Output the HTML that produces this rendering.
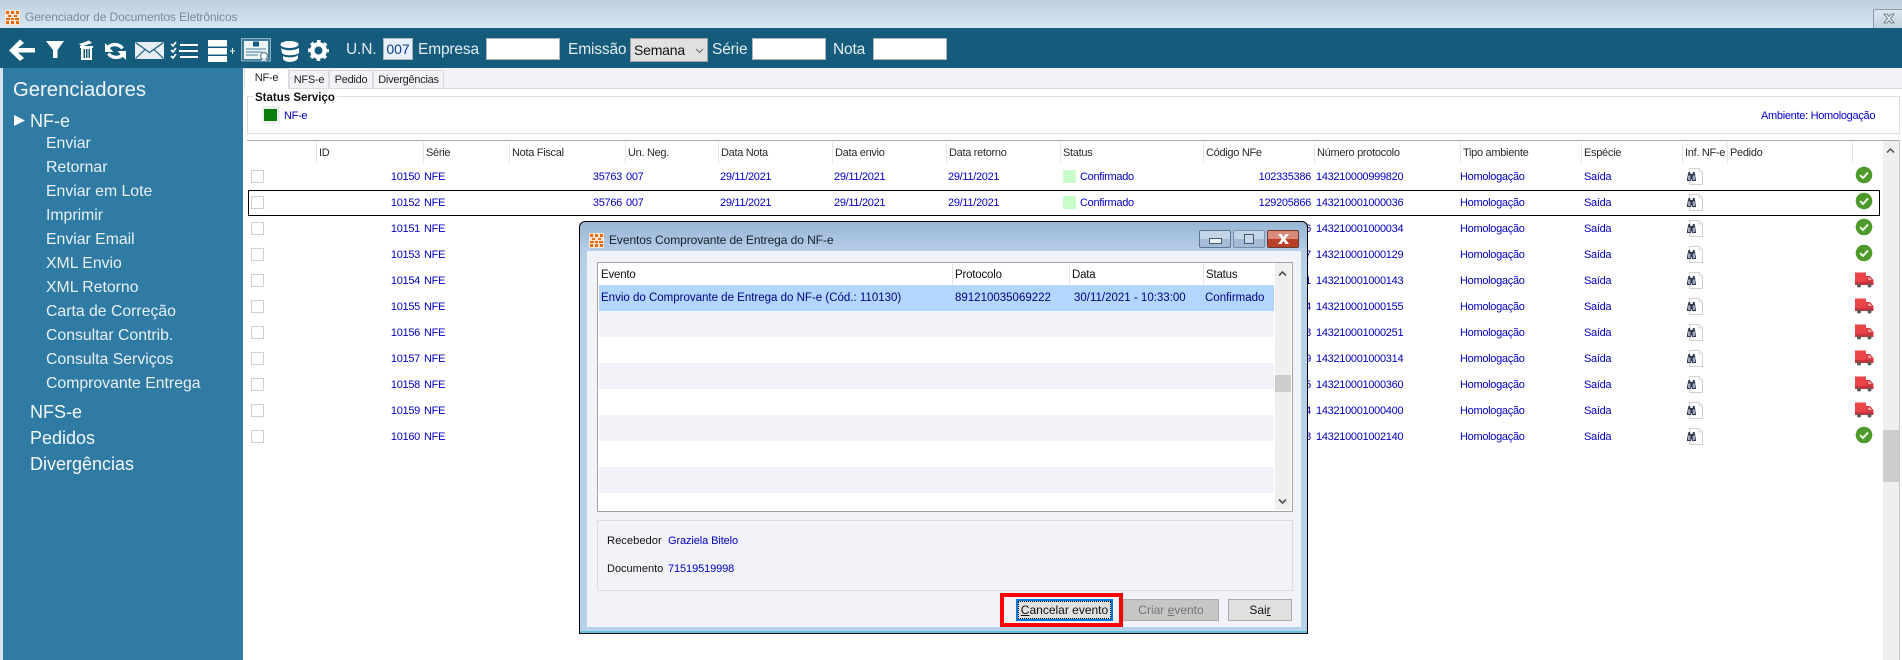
<!DOCTYPE html>
<html lang="pt-BR">
<head>
<meta charset="utf-8">
<title>Gerenciador de Documentos Eletrônicos</title>
<style>
html,body{margin:0;padding:0;width:1902px;height:660px;overflow:hidden;background:#fff;font-family:"Liberation Sans",sans-serif;}
div,span,i,b,svg{position:absolute;}
.x{white-space:nowrap;}
#title{left:0;top:0;width:1902px;height:28px;background:linear-gradient(#bbcddd,#d9e7f2);}
#bar{left:0;top:28px;width:1902px;height:40px;background:#155c7c;}
#frame{left:0;top:68px;width:3px;height:592px;background:#d8e6f2;}
#side{left:3px;top:68px;width:240px;height:592px;background:#2f7ba3;}
#strip{left:244px;top:68px;width:1658px;height:20px;background:#f1f3f8;border-bottom:1px solid #dcdcdc;}
.lb{color:#e4ecf1;font-size:15.5px;letter-spacing:-.15px;line-height:22px;top:39px;white-space:nowrap;}
.in{background:#fff;border:1px solid #a9b4bb;box-sizing:border-box;top:38px;height:22px;}
.s1{color:#f4f8fa;font-size:18px;line-height:24px;left:30px;white-space:nowrap;}
.s2{color:#e8f0f5;font-size:15.8px;line-height:24px;left:46px;white-space:nowrap;}
.tab{top:70px;height:18px;background:#f1f3f8;border:1px solid #dcdcdc;border-bottom:0;box-sizing:border-box;font-size:11px;letter-spacing:-.25px;line-height:18px;text-align:center;color:#222;}
.h{top:145px;font-size:11px;letter-spacing:-.3px;line-height:16px;color:#2a2a2a;white-space:nowrap;}
.sp{top:142px;width:1px;height:22px;background:#e6e6e6;}
.r{left:0;width:1902px;height:26px;font-size:11px;letter-spacing:-.3px;line-height:26px;color:#0000c4;}
.r span{white-space:nowrap;top:0;}
.c{left:251px;top:6px;width:13px;height:13px;border:1px solid #cfcfcf;box-sizing:border-box;background:#fff;}
.id{left:380px;width:40px;text-align:right;}
.se{left:424px;}.nf{left:580px;width:42px;text-align:right;}.un{left:626px;}
.d1{left:720px;}.d2{left:834px;}.d3{left:948px;}
.sw{left:1063px;top:6px;width:13px;height:13px;background:#c8fcc8;}
.st{left:1080px;}.cod{left:1250px;width:61px;text-align:right;}
.pr{left:1316px;}.ho{left:1460px;}.sa{left:1584px;}
.ic{left:1686px;top:3px;width:18px;height:20px;}
.ok{left:1855px;top:2px;width:18px;height:18px;}
.tr{left:1854px;top:4px;width:20px;height:16px;}
#dlg{left:579px;top:221px;width:729px;height:413px;box-sizing:border-box;border:1px solid #000;border-radius:6px 6px 0 0;background:linear-gradient(#98b6d4,#b5cee8 30px,#b8d1eb 60px);box-shadow:inset 0 -2px 0 #5cc4dc;}
.dt{font-size:12px;line-height:16px;white-space:nowrap;}
.row{left:19px;width:675px;height:26px;}
.b{top:377px;height:22px;box-sizing:border-box;font-size:12px;line-height:20px;text-align:center;white-space:nowrap;}
u{text-decoration:underline;}
</style>
</head>
<body>
<div id="title"></div>
<svg style="left:5px;top:10px" width="15" height="15" viewBox="0 0 15 15"><rect width="15" height="15" fill="#fde6d2"/><path d="M1 1h3v3H1zM6 1h3v3H6zM11 1h3v3h-3zM3 5h3v2H3zM9 5h3v2H9zM1 8h4v2H1zM6 8h3v2H6zM10 8h4v2h-4zM1 11h3v3H1zM6 11h3v3H6zM11 11h3v3h-3z" fill="#ec6a10"/></svg>
<div class="x" style="left:25px;top:9px;font-size:12px;line-height:16px;color:#7b8a98;letter-spacing:-.1px">Gerenciador de Documentos Eletrônicos</div>
<div style="left:1873px;top:9px;width:29px;height:20px;box-sizing:border-box;border:1px solid #8a9cad;border-right:0;border-radius:2px 0 0 2px;background:linear-gradient(#dce6ef,#c3d2df)"></div>
<svg style="left:1883px;top:13px" width="12" height="11" viewBox="0 0 12 11"><path d="M1 1h3l2 2.500L8 1h3L7.500 5.500 11 10H8L6 7.500 4 10H1l3.500-4.500z" fill="#e8eef4" stroke="#5d6b78" stroke-width=".8"/></svg>

<div id="bar"></div>
<div id="frame"></div>
<div id="side"></div>
<div id="strip"></div>

<svg style="left:0;top:0" width="340" height="68" viewBox="0 0 340 68">
<g fill="#fff">
<path d="M20 39.500 9 50.500 20 61 24 58 18 52.500H35V48H18L24 43z"/>
<path d="M46 41H64L57.500 50V58H53V50z"/>
<path d="M80 46H93V48H92V60H81V48H80zM83.500 49V58H85V49zM86 49V58H87.500V49zM88.500 49V58H90V49z"/>
<path d="M79 44 89 40.500 92 43 82 46.500z"/>
<path d="M105 43V52H113.500z"/>
<path d="M126 60V51H117.500z"/>
</g>
<path d="M122.500 48.500A8.500 7 0 0 0 108.500 47M108.500 53.500A8.500 7 0 0 0 122.500 55" fill="none" stroke="#fff" stroke-width="3.400"/>
<rect x="135" y="42" width="29" height="17" fill="#e8eff4"/>
<path d="M135.500 42.500 149.500 52.500 163.500 42.500M135.500 58.500 145 49.500M163.500 58.500 154 49.500" fill="none" stroke="#155c7c" stroke-width="1.200"/>
<g fill="#fff">
<rect x="180" y="44" width="18" height="2"/><rect x="179" y="50" width="19" height="2"/><rect x="180" y="56" width="18" height="2"/>
<rect x="208" y="40" width="19" height="6.500"/><rect x="208" y="48" width="19" height="6.500"/><rect x="208" y="56" width="19" height="6"/>
<path d="M230 50.500h2v-2.500h1v2.500h2v1h-2v2.500h-1v-2.500h-2z"/>
</g>
<path d="M171 44l2 2 3-4M171 50l2 2 3-4M171 56l2 2 3-4" fill="none" stroke="#fff" stroke-width="1.600"/>
<rect x="241.500" y="38.500" width="29" height="22.500" fill="#3f7c9c" stroke="#8eaebf"/>
<rect x="244" y="41" width="24" height="18" fill="#eef3f6"/>
<rect x="253" y="41.500" width="6" height="5" fill="#155c7c"/>
<path d="M246 49H266M246 52H262M246 55H258" stroke="#3f7c9c" stroke-width="1"/>
<circle cx="264" cy="56" r="3.500" fill="#fff" stroke="#6d8ea2" stroke-width="1.400"/>
<path d="M262 59l-1 3 3-1 3 1-1-3" fill="#dbe5eb" stroke="#6d8ea2" stroke-width=".7"/>
<g fill="#fff">
<ellipse cx="289.500" cy="44.500" rx="9" ry="3.500"/>
<path d="M281 48C284 51 295 51 299 48V53C295 56 284 56 282 53z"/>
<path d="M283 56C286 58 295 58 298 55V58C296 63 285 63 283 59z"/>
</g>
<circle cx="318.500" cy="50.500" r="6.200" fill="none" stroke="#fff" stroke-width="4.400"/>
<circle cx="318.500" cy="50.500" r="9" fill="none" stroke="#fff" stroke-width="3" stroke-dasharray="3.500 3.570" stroke-dashoffset="1.750"/>
</svg>

<div class="lb" style="left:346px">U.N.</div>
<div class="in" style="left:383px;width:30px;background:#e8f0fd;color:#0b3f8a;font-size:14px;line-height:21px;text-align:center">007</div>
<div class="lb" style="left:418px">Empresa</div>
<div class="in" style="left:486px;width:74px"></div>
<div class="lb" style="left:568px">Emissão</div>
<div style="left:630px;top:38px;width:78px;height:24px;box-sizing:border-box;background:#e1e1e1;border:1px solid #a5a5a5"></div>
<div class="x" style="left:634px;top:42px;font-size:14px;line-height:17px;color:#111;letter-spacing:-.2px">Semana</div>
<svg style="left:695px;top:48px" width="9" height="6" viewBox="0 0 9 6"><path d="M1 1l3.500 3.500L8 1" fill="none" stroke="#666" stroke-width="1"/></svg>
<div class="lb" style="left:712px">Série</div>
<div class="in" style="left:752px;width:74px"></div>
<div class="lb" style="left:833px">Nota</div>
<div class="in" style="left:873px;width:74px"></div>

<div class="x" style="left:13px;top:76px;color:#f2f7fa;font-size:20.300px;line-height:28px">Gerenciadores</div>
<svg style="left:14px;top:115px" width="11" height="11" viewBox="0 0 11 11"><path d="M0 0 11 5.500 0 11z" fill="#fff"/></svg>
<div class="s1" style="top:109px">NF-e</div>
<div class="s2" style="top:132px">Enviar</div>
<div class="s2" style="top:156px">Retornar</div>
<div class="s2" style="top:180px">Enviar em Lote</div>
<div class="s2" style="top:204px">Imprimir</div>
<div class="s2" style="top:228px">Enviar Email</div>
<div class="s2" style="top:252px">XML Envio</div>
<div class="s2" style="top:276px">XML Retorno</div>
<div class="s2" style="top:300px">Carta de Correção</div>
<div class="s2" style="top:324px">Consultar Contrib.</div>
<div class="s2" style="top:348px">Consulta Serviços</div>
<div class="s2" style="top:372px">Comprovante Entrega</div>
<div class="s1" style="top:400px">NFS-e</div>
<div class="s1" style="top:426px">Pedidos</div>
<div class="s1" style="top:452px">Divergências</div>

<div class="tab" style="left:244px;top:68px;width:45px;height:21px;background:#fff;line-height:18px;border-bottom:0">NF-e</div>
<div class="tab" style="left:289px;width:40px">NFS-e</div>
<div class="tab" style="left:329px;width:44px">Pedido</div>
<div class="tab" style="left:373px;width:71px">Divergências</div>

<div style="left:247px;top:96px;width:1653px;height:38px;box-sizing:border-box;border:1px solid #dedede"></div>
<div class="x" style="left:253px;top:90px;padding:0 2px;background:#fff;font-size:11.500px;font-weight:bold;line-height:16px;color:#111">Status Serviço</div>
<div style="left:262px;top:106px;width:18px;height:18px;background:#eef0ee"></div>
<div style="left:264px;top:109px;width:13px;height:12px;background:#0a7d0a"></div>
<div class="x" style="left:284px;top:108px;font-size:11px;line-height:16px;color:#0000c4;letter-spacing:-.3px">NF-e</div>
<div class="x" style="left:1761px;top:108px;font-size:11px;line-height:16px;color:#0000c4;letter-spacing:-.3px">Ambiente: Homologação</div>

<div style="left:247px;top:140px;width:1653px;height:1px;background:#aaa"></div>
<div style="left:1899px;top:140px;width:1px;height:520px;background:#c4c4c4"></div>
<div class="sp" style="left:316px"></div><div class="sp" style="left:423px"></div><div class="sp" style="left:509px"></div><div class="sp" style="left:625px"></div><div class="sp" style="left:718px"></div><div class="sp" style="left:832px"></div><div class="sp" style="left:946px"></div><div class="sp" style="left:1060px"></div><div class="sp" style="left:1203px"></div><div class="sp" style="left:1314px"></div><div class="sp" style="left:1460px"></div><div class="sp" style="left:1581px"></div><div class="sp" style="left:1682px"></div><div class="sp" style="left:1727px"></div><div class="sp" style="left:1852px"></div>
<div class="h" style="left:319px">ID</div>
<div class="h" style="left:426px">Série</div>
<div class="h" style="left:512px">Nota Fiscal</div>
<div class="h" style="left:628px">Un. Neg.</div>
<div class="h" style="left:721px">Data Nota</div>
<div class="h" style="left:835px">Data envio</div>
<div class="h" style="left:949px">Data retorno</div>
<div class="h" style="left:1063px">Status</div>
<div class="h" style="left:1206px">Código NFe</div>
<div class="h" style="left:1317px">Número protocolo</div>
<div class="h" style="left:1463px">Tipo ambiente</div>
<div class="h" style="left:1584px">Espécie</div>
<div class="h" style="left:1685px">Inf. NF-e</div>
<div class="h" style="left:1730px">Pedido</div>

<svg width="0" height="0" style="left:0;top:0">
<defs>
<g id="doc"><path d="M3.500 1.500H13L16.500 5V17.500H3.500z" fill="#fff" stroke="#cfcfcf"/><path d="M13 1.500V5H16.500" fill="#f2f2f2" stroke="#dedede"/>
<path d="M2 7 1 12V14H5V12.500H6V14H10V12L9 7 8.500 5H7L6.500 7H4.500L4 5H2.500z" fill="#2e3a4e"/><rect x="2" y="8.500" width="2.400" height="4.500" fill="#a0aabb"/><rect x="6.800" y="8.500" width="2.400" height="4.500" fill="#a0aabb"/></g>
<g id="ck"><circle cx="9" cy="9" r="8.300" fill="#4d9a2a"/><path d="M5 9.200 8 12 13 6.500" fill="none" stroke="#f4f8f0" stroke-width="2"/></g>
<g id="trk"><path d="M1 0.500H12V13H1z" fill="#ea4448"/><path d="M12 4H16L19.500 8V13H12z" fill="#d83c42"/><path d="M14 5.500H16L18 8H14z" fill="#f0a0a4"/><rect x="1" y="10" width="18.500" height="3" fill="#c8343c"/><circle cx="5" cy="13.500" r="2" fill="#5c5c5c"/><circle cx="15.500" cy="13.500" r="2" fill="#5c5c5c"/></g>
</defs>
</svg>

<div class="r" style="top:164px"><i class="c"></i><span class="id">10150</span><span class="se">NFE</span><span class="nf">35763</span><span class="un">007</span><span class="d1">29/11/2021</span><span class="d2">29/11/2021</span><span class="d3">29/11/2021</span><i class="sw"></i><span class="st">Confirmado</span><span class="cod">102335386</span><span class="pr">143210000999820</span><span class="ho">Homologação</span><span class="sa">Saída</span><svg class="ic" viewBox="0 0 18 20"><use href="#doc"/></svg><svg class="ok" viewBox="0 0 18 18"><use href="#ck"/></svg></div>
<div class="r" style="top:190px"><i class="c"></i><span class="id">10152</span><span class="se">NFE</span><span class="nf">35766</span><span class="un">007</span><span class="d1">29/11/2021</span><span class="d2">29/11/2021</span><span class="d3">29/11/2021</span><i class="sw"></i><span class="st">Confirmado</span><span class="cod">129205866</span><span class="pr">143210001000036</span><span class="ho">Homologação</span><span class="sa">Saída</span><svg class="ic" viewBox="0 0 18 20"><use href="#doc"/></svg><svg class="ok" viewBox="0 0 18 18"><use href="#ck"/></svg></div>
<div style="left:248px;top:190px;width:1632px;height:26px;box-sizing:border-box;border:1px solid #000"></div>
<div class="r" style="top:216px"><i class="c"></i><span class="id">10151</span><span class="se">NFE</span><span class="cod">6</span><span class="pr">143210001000034</span><span class="ho">Homologação</span><span class="sa">Saída</span><svg class="ic" viewBox="0 0 18 20"><use href="#doc"/></svg><svg class="ok" viewBox="0 0 18 18"><use href="#ck"/></svg></div>
<div class="r" style="top:242px"><i class="c"></i><span class="id">10153</span><span class="se">NFE</span><span class="cod">7</span><span class="pr">143210001000129</span><span class="ho">Homologação</span><span class="sa">Saída</span><svg class="ic" viewBox="0 0 18 20"><use href="#doc"/></svg><svg class="ok" viewBox="0 0 18 18"><use href="#ck"/></svg></div>
<div class="r" style="top:268px"><i class="c"></i><span class="id">10154</span><span class="se">NFE</span><span class="cod">1</span><span class="pr">143210001000143</span><span class="ho">Homologação</span><span class="sa">Saída</span><svg class="ic" viewBox="0 0 18 20"><use href="#doc"/></svg><svg class="tr" viewBox="0 0 20 16"><use href="#trk"/></svg></div>
<div class="r" style="top:294px"><i class="c"></i><span class="id">10155</span><span class="se">NFE</span><span class="cod">4</span><span class="pr">143210001000155</span><span class="ho">Homologação</span><span class="sa">Saída</span><svg class="ic" viewBox="0 0 18 20"><use href="#doc"/></svg><svg class="tr" viewBox="0 0 20 16"><use href="#trk"/></svg></div>
<div class="r" style="top:320px"><i class="c"></i><span class="id">10156</span><span class="se">NFE</span><span class="cod">8</span><span class="pr">143210001000251</span><span class="ho">Homologação</span><span class="sa">Saída</span><svg class="ic" viewBox="0 0 18 20"><use href="#doc"/></svg><svg class="tr" viewBox="0 0 20 16"><use href="#trk"/></svg></div>
<div class="r" style="top:346px"><i class="c"></i><span class="id">10157</span><span class="se">NFE</span><span class="cod">9</span><span class="pr">143210001000314</span><span class="ho">Homologação</span><span class="sa">Saída</span><svg class="ic" viewBox="0 0 18 20"><use href="#doc"/></svg><svg class="tr" viewBox="0 0 20 16"><use href="#trk"/></svg></div>
<div class="r" style="top:372px"><i class="c"></i><span class="id">10158</span><span class="se">NFE</span><span class="cod">5</span><span class="pr">143210001000360</span><span class="ho">Homologação</span><span class="sa">Saída</span><svg class="ic" viewBox="0 0 18 20"><use href="#doc"/></svg><svg class="tr" viewBox="0 0 20 16"><use href="#trk"/></svg></div>
<div class="r" style="top:398px"><i class="c"></i><span class="id">10159</span><span class="se">NFE</span><span class="cod">4</span><span class="pr">143210001000400</span><span class="ho">Homologação</span><span class="sa">Saída</span><svg class="ic" viewBox="0 0 18 20"><use href="#doc"/></svg><svg class="tr" viewBox="0 0 20 16"><use href="#trk"/></svg></div>
<div class="r" style="top:424px"><i class="c"></i><span class="id">10160</span><span class="se">NFE</span><span class="cod">8</span><span class="pr">143210001002140</span><span class="ho">Homologação</span><span class="sa">Saída</span><svg class="ic" viewBox="0 0 18 20"><use href="#doc"/></svg><svg class="ok" viewBox="0 0 18 18"><use href="#ck"/></svg></div>

<div style="left:1883px;top:141px;width:16px;height:519px;background:#efefef"></div>
<div style="left:1883px;top:430px;width:16px;height:52px;background:#cdcdcd"></div>
<svg style="left:1886px;top:147px" width="9" height="7" viewBox="0 0 9 7"><path d="M1 5.500 4.500 2 8 5.500" fill="none" stroke="#505050" stroke-width="1.500"/></svg>

<div id="dlg">
  <svg style="left:9px;top:11px" width="15" height="15" viewBox="0 0 15 15"><rect width="15" height="15" fill="#fde6d2"/><path d="M1 1h3v3H1zM6 1h3v3H6zM11 1h3v3h-3zM3 5h3v2H3zM9 5h3v2H9zM1 8h4v2H1zM6 8h3v2H6zM10 8h4v2h-4zM1 11h3v3H1zM6 11h3v3H6zM11 11h3v3h-3z" fill="#ec6a10"/></svg>
  <div class="dt" style="left:29px;top:10px;color:#14202c;letter-spacing:-.08px">Eventos Comprovante de Entrega do NF-e</div>
  <div style="left:619px;top:8px;width:32px;height:18px;box-sizing:border-box;border:1px solid #5d7690;border-radius:2px;background:linear-gradient(#c3d5e8 50%,#a2bcd8 50%)"><div style="left:9px;top:7px;width:11px;height:4px;background:#eef3f8;border:1px solid #46586c"></div></div>
  <div style="left:653px;top:8px;width:32px;height:18px;box-sizing:border-box;border:1px solid #7a90a8;border-radius:2px;background:linear-gradient(#c3d5e8 50%,#a2bcd8 50%)"><div style="left:10px;top:3px;width:8px;height:8px;background:#c8d8e8;border:1px solid #46586c"></div></div>
  <div style="left:687px;top:8px;width:32px;height:18px;box-sizing:border-box;border:1px solid #6a3a32;border-radius:2px;background:linear-gradient(#d98a78 50%,#b93f26 50%)"><svg style="left:9px;top:2px" width="13" height="12" viewBox="0 0 13 12"><path d="M1 1h3.500L6.500 4 8.500 1H12L8.300 6 12 11H8.500L6.500 8 4.500 11H1l3.700-5z" fill="#fff"/></svg></div>

  <div style="left:7px;top:29px;width:714px;height:376px;background:#f1f3f8"></div>

  <div style="left:17px;top:40px;width:696px;height:250px;box-sizing:border-box;border:1px solid #a3a3a3;background:#fff"></div>
  <div style="left:372px;top:42px;width:1px;height:22px;background:#e6e6e6"></div>
  <div style="left:489px;top:42px;width:1px;height:22px;background:#e6e6e6"></div>
  <div style="left:623px;top:42px;width:1px;height:22px;background:#e6e6e6"></div>
  <div class="dt" style="left:21px;top:45px;color:#111;font-size:11.500px;letter-spacing:-.2px">Evento</div>
  <div class="dt" style="left:375px;top:45px;color:#111;font-size:11.500px;letter-spacing:-.2px">Protocolo</div>
  <div class="dt" style="left:492px;top:45px;color:#111;font-size:11.500px;letter-spacing:-.2px">Data</div>
  <div class="dt" style="left:626px;top:45px;color:#111;font-size:11.500px;letter-spacing:-.2px">Status</div>

  <div class="row" style="top:63px;background:#b2d7ff"></div>
  <div class="row" style="top:89px;background:#f1f3f8"></div>
  <div class="row" style="top:141px;background:#f1f3f8"></div>
  <div class="row" style="top:193px;background:#f1f3f8"></div>
  <div class="row" style="top:245px;background:#f1f3f8"></div>

  <div class="dt" style="left:21px;top:68px;color:#00007e;font-size:11.500px">Envio do Comprovante de Entrega do NF-e (Cód.: 110130)</div>
  <div class="dt" style="left:375px;top:68px;color:#00007e;font-size:11.500px">891210035069222</div>
  <div class="dt" style="left:494px;top:68px;color:#00007e;font-size:11.500px">30/11/2021 - 10:33:00</div>
  <div class="dt" style="left:625px;top:68px;color:#00007e;font-size:11.500px">Confirmado</div>

  <div style="left:695px;top:41px;width:16px;height:247px;background:#efefef"></div>
  <div style="left:695px;top:153px;width:16px;height:17px;background:#cdcdcd"></div>
  <svg style="left:698px;top:48px" width="9" height="7" viewBox="0 0 9 7"><path d="M1 5.500 4.500 2 8 5.500" fill="none" stroke="#505050" stroke-width="1.600"/></svg>
  <svg style="left:698px;top:276px" width="9" height="7" viewBox="0 0 9 7"><path d="M1 1.500 4.500 5 8 1.500" fill="none" stroke="#505050" stroke-width="1.600"/></svg>

  <div style="left:17px;top:298px;width:696px;height:71px;box-sizing:border-box;border:1px solid #dcdcdc"></div>
  <div class="dt" style="left:27px;top:311px;color:#111;font-size:11.200px">Recebedor</div>
  <div class="dt" style="left:88px;top:311px;color:#0000c4;font-size:11px;letter-spacing:-.1px">Graziela Bitelo</div>
  <div class="dt" style="left:27px;top:339px;color:#111;font-size:11px">Documento</div>
  <div class="dt" style="left:88px;top:339px;color:#0000c4;font-size:11px;letter-spacing:-.1px">71519519998</div>

  <div style="left:420px;top:371px;width:123px;height:34px;box-sizing:border-box;border:4px solid #f00"></div>
  <div class="b" style="left:436px;width:97px;background:#e1e1e1;border:2px solid #0078d7;color:#111;line-height:18px"><div style="left:0;top:0;width:93px;height:18px;box-sizing:border-box;border:1px dotted #000"></div><u>C</u>ancelar evento</div>
  <div class="b" style="left:543px;width:96px;background:#c6c6c6;border:1px solid #adadad;color:#757575"><span style="position:static">Criar <u>e</u>vento</span></div>
  <div class="b" style="left:648px;width:64px;background:#e1e1e1;border:1px solid #adadad;color:#111">Sai<u>r</u></div>
</div>
</body>
</html>
